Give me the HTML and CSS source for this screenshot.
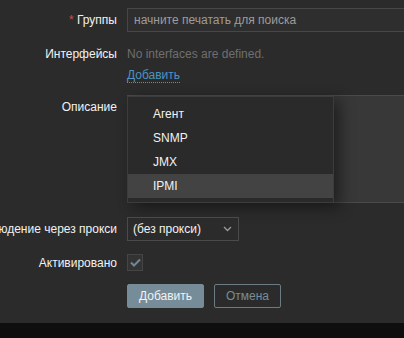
FILE: index.html
```html
<!DOCTYPE html>
<html lang="ru">

<head>
    <meta charset="UTF-8">
    <meta name="viewport" content="width=device-width, initial-scale=1.0">
    <title>Узел сети</title>
    <link rel="stylesheet" href="styles.css">
</head>

<body>
    <div class="page">
        <div class="form">

            <div class="row row-groups">
                <label class="label"><span class="req">*</span>&nbsp;Группы</label>
                <div class="field">
                    <div class="multiselect">начните печатать для поиска</div>
                </div>
            </div>

            <div class="row row-interfaces">
                <label class="label">Интерфейсы</label>
                <div class="field">
                    <div class="muted">No interfaces are defined.</div>
                    <a class="link" href="#">Добавить</a>
                </div>
            </div>

            <div class="row row-description">
                <label class="label label-top">Описание</label>
                <div class="field">
                    <div class="textarea"></div>
                    <ul class="menu">
                        <li>Агент</li>
                        <li>SNMP</li>
                        <li>JMX</li>
                        <li class="active">IPMI</li>
                    </ul>
                </div>
            </div>

            <div class="row row-proxy">
                <label class="label">Наблюдение через прокси</label>
                <div class="field">
                    <div class="select">
                        <span>(без прокси)</span>
                        <svg width="9" height="6" viewBox="0 0 9 6">
                            <path d="M1 1 L4.5 4.5 L8 1" fill="none" stroke="#9a9a9a" stroke-width="1.3" />
                        </svg>
                    </div>
                </div>
            </div>

            <div class="row row-check">
                <label class="label">Активировано</label>
                <div class="field">
                    <div class="checkbox">
                        <svg width="13" height="11" viewBox="0 0 13 11">
                            <path d="M2 5.5 L5 8.5 L11 2.5" fill="none" stroke="#6e8894" stroke-width="2" />
                        </svg>
                    </div>
                </div>
            </div>

            <div class="row row-buttons">
                <div class="label"></div>
                <div class="field buttons">
                    <button class="btn btn-main">Добавить</button>
                    <button class="btn btn-alt">Отмена</button>
                </div>
            </div>

        </div>
        <div class="footer"></div>
    </div>
</body>

</html>
```

FILE: styles.css
```css
* {
    margin: 0px;
    padding: 0px;
    box-sizing: border-box;
}

body {
    background-color: #2b2b2b;
    font-family: "Liberation Sans", Arial, sans-serif;
    font-size: 12px;
    color: #f2f2f2;
    overflow: hidden;
}

.page {
    width: 404px;
    height: 338px;
    display: flex;
    flex-direction: column;
}

.form {
    flex: 1;
    padding-top: 8px;
}

.row {
    display: grid;
    grid-template-columns: 117px 1fr;
    column-gap: 10px;
    align-items: center;
}

.label {
    display: flex;
    justify-content: flex-end;
    white-space: nowrap;
    line-height: 14px;
    color: #f2f2f2;
}

.label-top {
    align-self: start;
    padding-top: 5px;
}

.req {
    color: #c94d4d;
}

.field {
    position: relative;
    min-width: 0;
}

.multiselect {
    height: 24px;
    width: 300px;
    border: 1px solid #474747;
    background-color: #2e2e2e;
    color: #9c9c9c;
    padding: 4px 6px;
    line-height: 14px;
    white-space: nowrap;
}

.row-interfaces {
    margin-top: 15px;
    align-items: start;
}

.muted {
    color: #6f6f6f;
    line-height: 14px;
}

.link {
    display: inline-block;
    margin-top: 7px;
    color: #4a94c3;
    text-decoration: none;
    line-height: 14px;
    border-bottom: 1px dotted #4a94c3;
}

.row-description {
    margin-top: 12px;
}

.textarea {
    height: 108px;
    width: 300px;
    border: 1px solid #4a4a4a;
    background-color: #383838;
}

.menu {
    position: absolute;
    left: 0px;
    top: 1px;
    width: 207px;
    height: 107px;
    list-style: none;
    background-color: #2a2a2a;
    border: 1px solid #3c3c3c;
    padding-top: 5px;
    box-shadow: 6px 4px 14px rgba(0, 0, 0, 0.45);
}

.menu li {
    height: 24px;
    line-height: 24px;
    padding-left: 25px;
    color: #f2f2f2;
}

.menu li.active {
    background-color: #434343;
}

.row-proxy {
    margin-top: 14px;
}

.select {
    width: 112px;
    height: 24px;
    border: 1px solid #4a4a4a;
    background-color: #2b2b2b;
    display: flex;
    justify-content: space-between;
    align-items: center;
    padding: 0px 6px 0px 5px;
    color: #f2f2f2;
}

.row-check {
    margin-top: 13px;
}

.checkbox {
    width: 16px;
    height: 17px;
    border: 1px solid #454545;
    background-color: #333333;
    display: flex;
    justify-content: center;
    align-items: center;
}

.row-buttons {
    margin-top: 13px;
}

.buttons {
    display: flex;
    gap: 10px;
}

.btn {
    height: 24px;
    font-family: "Liberation Sans", Arial, sans-serif;
    font-size: 12px;
    border-radius: 2px;
    cursor: pointer;
}

.btn-main {
    width: 77px;
    background-color: #768d99;
    border: 1px solid #768d99;
    color: #f2f2f2;
}

.btn-alt {
    width: 67px;
    background-color: transparent;
    border: 1px solid #6d7b82;
    color: #768d99;
}

.footer {
    height: 15px;
    background-color: #0e0e0f;
}
```
